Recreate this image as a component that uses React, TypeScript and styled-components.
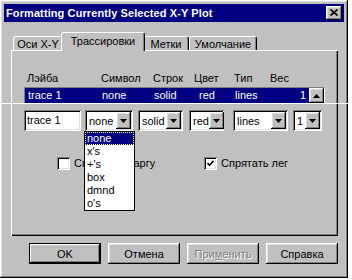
import React from "react";
import styled, { createGlobalStyle, css } from "styled-components";

const Global = createGlobalStyle`
  html, body { margin: 0; padding: 0; background: #fff; }
  body { font-family: "Liberation Sans", Arial, sans-serif; font-size: 11px; color: #000; }
  * { box-sizing: border-box; }
`;

const raised = css`
  box-shadow: inset -1px -1px #000, inset 1px 1px #fff, inset -2px -2px #808080, inset 2px 2px #dfdfdf;
`;
const sunken = css`
  box-shadow: inset 1px 1px #808080, inset -1px -1px #fff, inset 2px 2px #000, inset -2px -2px #dfdfdf;
`;

const Root = styled.div`
  position: relative;
  width: 352px;
  height: 280px;
`;

const Window = styled.div`
  width: 348px;
  height: 278px;
  background: #c0c0c0;
  ${raised};
  padding: 4px;
  display: flex;
  flex-direction: column;
`;

const TitleBar = styled.div`
  height: 18px;
  background: #000080;
  color: #fff;
  display: flex;
  align-items: center;
  justify-content: space-between;
  padding: 0 2px;
`;

const Title = styled.span`
  font-weight: bold;
  font-size: 11px;
  letter-spacing: 0.1px;
`;

const CloseButton = styled.div`
  width: 16px;
  height: 14px;
  background: #c0c0c0;
  ${raised};
  display: flex;
  align-items: center;
  justify-content: center;
  padding-bottom: 1px;
`;

const Body = styled.div`
  padding: 10px 6px 0 7px;
  display: flex;
  flex-direction: column;
`;

const TabStrip = styled.div`
  height: 18px;
  display: flex;
  align-items: flex-end;
  padding-left: 2px;
  position: relative;
  z-index: 1;
`;

const Tab = styled.div<{ $w: number; $active?: boolean }>`
  width: ${(p) => (p.$active ? p.$w + 4 : p.$w)}px;
  height: ${(p) => (p.$active ? 19 : 14)}px;
  margin: 0 ${(p) => (p.$active ? -2 : 0)}px ${(p) => (p.$active ? -1 : 0)}px;
  background: #c0c0c0;
  border-left: 1px solid #fff;
  border-top: 1px solid #fff;
  border-right: 1px solid #000;
  border-radius: 3px 3px 0 0;
  box-shadow: inset -1px 0 #808080;
  display: flex;
  align-items: center;
  justify-content: center;
  padding-bottom: ${(p) => (p.$active ? 2 : 0)}px;
  position: relative;
  z-index: ${(p) => (p.$active ? 2 : 1)};
`;

const Panel = styled.div`
  height: 186px;
  background: #c0c0c0;
  box-shadow: inset 1px 1px #fff, inset -1px -1px #000, inset -2px -2px #808080;
  padding: 22px 0 0 13px;
  display: flex;
  flex-direction: column;
`;

const Header = styled.div`
  display: grid;
  grid-template-columns: 74px 52px 41px 40px 36px auto;
  padding-left: 3px;
  height: 13px;
  line-height: 13px;
  margin-bottom: 2px;
`;

const ListBox = styled.div`
  width: 301px;
  height: 17px;
  display: flex;
  border-top: 1px solid #808080;
  border-left: 1px solid #808080;
  border-right: 1px solid #fff;
  border-bottom: 1px solid #fff;
  background: #fff;
`;

const ListRow = styled.div`
  width: 284px;
  height: 15px;
  background: #000080;
  color: #fff;
  display: grid;
  grid-template-columns: 74px 52px 45px 36px 1fr auto;
  padding: 0 3px;
  line-height: 15px;
`;

const RightCell = styled.span`
  text-align: right;
`;

const ArrowButton = styled.div<{ $w: number; $h: number }>`
  width: ${(p) => p.$w}px;
  height: ${(p) => p.$h}px;
  flex: none;
  background: #c0c0c0;
  ${raised};
  display: flex;
  align-items: center;
  justify-content: center;
`;

const EditRow = styled.div`
  margin-top: 6px;
  height: 21px;
  display: flex;
`;

const TextBox = styled.div<{ $w: number }>`
  width: ${(p) => p.$w}px;
  height: 21px;
  background: #fff;
  ${sunken};
  padding-left: 3px;
  line-height: 21px;
`;

const Combo = styled.div<{ $w: number; $ml: number }>`
  position: relative;
  width: ${(p) => p.$w}px;
  height: 21px;
  margin-left: ${(p) => p.$ml}px;
  background: #fff;
  ${sunken};
  display: flex;
  align-items: center;
  justify-content: space-between;
  padding: 2px 2px 2px 4px;
`;

const DropList = styled.div`
  position: absolute;
  left: -1px;
  top: 21px;
  width: 51px;
  background: #fff;
  border: 1px solid #000;
  z-index: 5;
  display: flex;
  flex-direction: column;
`;

const DropItem = styled.div<{ $sel?: boolean }>`
  height: 13px;
  line-height: 12px;
  padding-left: 2px;
  background: ${(p) => (p.$sel ? "#000080" : "#fff")};
  color: ${(p) => (p.$sel ? "#fff" : "#000")};
  outline: ${(p) => (p.$sel ? "1px dotted #ffff80" : "none")};
  outline-offset: -1px;
`;

const CheckRow = styled.div`
  margin-top: 26px;
  display: flex;
  padding-left: 33px;
  height: 13px;
`;

const CheckItem = styled.div<{ $w?: number }>`
  width: ${(p) => (p.$w ? `${p.$w}px` : "auto")};
  display: flex;
  align-items: center;
  gap: 4px;
  line-height: 13px;
`;

const CheckBox = styled.div`
  width: 13px;
  height: 13px;
  flex: none;
  background: #fff;
  ${sunken};
  display: flex;
  align-items: center;
  justify-content: center;
`;

const CheckLabel = styled.span<{ $clip?: number; $ws?: number }>`
  white-space: nowrap;
  overflow: hidden;
  word-spacing: ${(p) => p.$ws ?? 0}px;
  ${(p) => (p.$clip ? `max-width: ${p.$clip}px;` : "")}
`;

const ButtonRow = styled.div`
  margin-top: 7px;
  padding-left: 18px;
  display: flex;
  gap: 7px;
`;

const Button = styled.div<{ $default?: boolean; $disabled?: boolean }>`
  width: 74px;
  height: 21px;
  background: #c0c0c0;
  display: flex;
  align-items: center;
  justify-content: center;
  color: ${(p) => (p.$disabled ? "#808080" : "#000")};
  text-shadow: ${(p) => (p.$disabled ? "1px 1px #fff" : "none")};
  ${(p) =>
    p.$default
      ? css`
          border: 1px solid #000;
          box-shadow: inset -1px -1px #000, inset 1px 1px #fff, inset -2px -2px #808080;
        `
      : raised}
`;

const ArtifactLine = styled.div`
  position: absolute;
  left: 0;
  top: 103px;
  width: 352px;
  height: 1px;
  background: #fff;
  z-index: 10;
`;

const Down = () => (
  <svg width="7" height="4" viewBox="0 0 7 4">
    <path d="M0 0H7L3.5 4Z" fill="#000" />
  </svg>
);

const Up = () => (
  <svg width="7" height="4" viewBox="0 0 7 4">
    <path d="M0 4H7L3.5 0Z" fill="#000" />
  </svg>
);

const ComboField = ({ w, ml, value, children }: { w: number; ml: number; value: string; children?: React.ReactNode }) => (
  <Combo $w={w} $ml={ml}>
    <span>{value}</span>
    <ArrowButton $w={15} $h={17}>
      <Down />
    </ArrowButton>
    {children}
  </Combo>
);

export default function App() {
  return (
    <Root>
      <Global />
      <Window>
        <TitleBar>
          <Title>Formatting Currently Selected X-Y Plot</Title>
          <CloseButton>
            <svg width="8" height="7" viewBox="0 0 8 7">
              <path d="M0.5 0.5L7.5 6.5M7.5 0.5L0.5 6.5" stroke="#000" strokeWidth="1.6" />
            </svg>
          </CloseButton>
        </TitleBar>
        <Body>
          <TabStrip>
            <Tab $w={50}>Оси X-Y</Tab>
            <Tab $w={80} $active>
              Трассировки
            </Tab>
            <Tab $w={46}>Метки</Tab>
            <Tab $w={68}>Умолчание</Tab>
          </TabStrip>
          <Panel>
            <Header>
              <span>Лэйба</span>
              <span>Символ</span>
              <span>Строк</span>
              <span>Цвет</span>
              <span>Тип</span>
              <span>Вес</span>
            </Header>
            <ListBox>
              <ListRow>
                <span>trace 1</span>
                <span>none</span>
                <span>solid</span>
                <span>red</span>
                <span>lines</span>
                <RightCell>1</RightCell>
              </ListRow>
              <ArrowButton $w={15} $h={15}>
                <Up />
              </ArrowButton>
            </ListBox>
            <EditRow>
              <TextBox $w={57}>trace 1</TextBox>
              <ComboField w={48} ml={4} value="none">
                <DropList>
                  <DropItem $sel>none</DropItem>
                  <DropItem>x's</DropItem>
                  <DropItem>+'s</DropItem>
                  <DropItem>box</DropItem>
                  <DropItem>dmnd</DropItem>
                  <DropItem>o's</DropItem>
                </DropList>
              </ComboField>
              <ComboField w={45} ml={5} value="solid" />
              <ComboField w={35} ml={6} value="red" />
              <ComboField w={55} ml={9} value="lines" />
              <ComboField w={29} ml={5} value="1" />
            </EditRow>
            <CheckRow>
              <CheckItem $w={147}>
                <CheckBox />
                <CheckLabel $clip={94} $ws={9}>
                  Спрятать аргу
                </CheckLabel>
              </CheckItem>
              <CheckItem>
                <CheckBox>
                  <svg width="7" height="7" viewBox="0 0 7 7">
                    <path d="M0.5 3L2.5 5.2L6.5 0.8" stroke="#000" strokeWidth="1.6" fill="none" />
                  </svg>
                </CheckBox>
                <CheckLabel>Спрятать лег</CheckLabel>
              </CheckItem>
            </CheckRow>
          </Panel>
          <ButtonRow>
            <Button $default>OK</Button>
            <Button>Отмена</Button>
            <Button $disabled>
              <span>
                При<u>м</u>енить
              </span>
            </Button>
            <Button>Справка</Button>
          </ButtonRow>
        </Body>
      </Window>
      <ArtifactLine />
    </Root>
  );
}
